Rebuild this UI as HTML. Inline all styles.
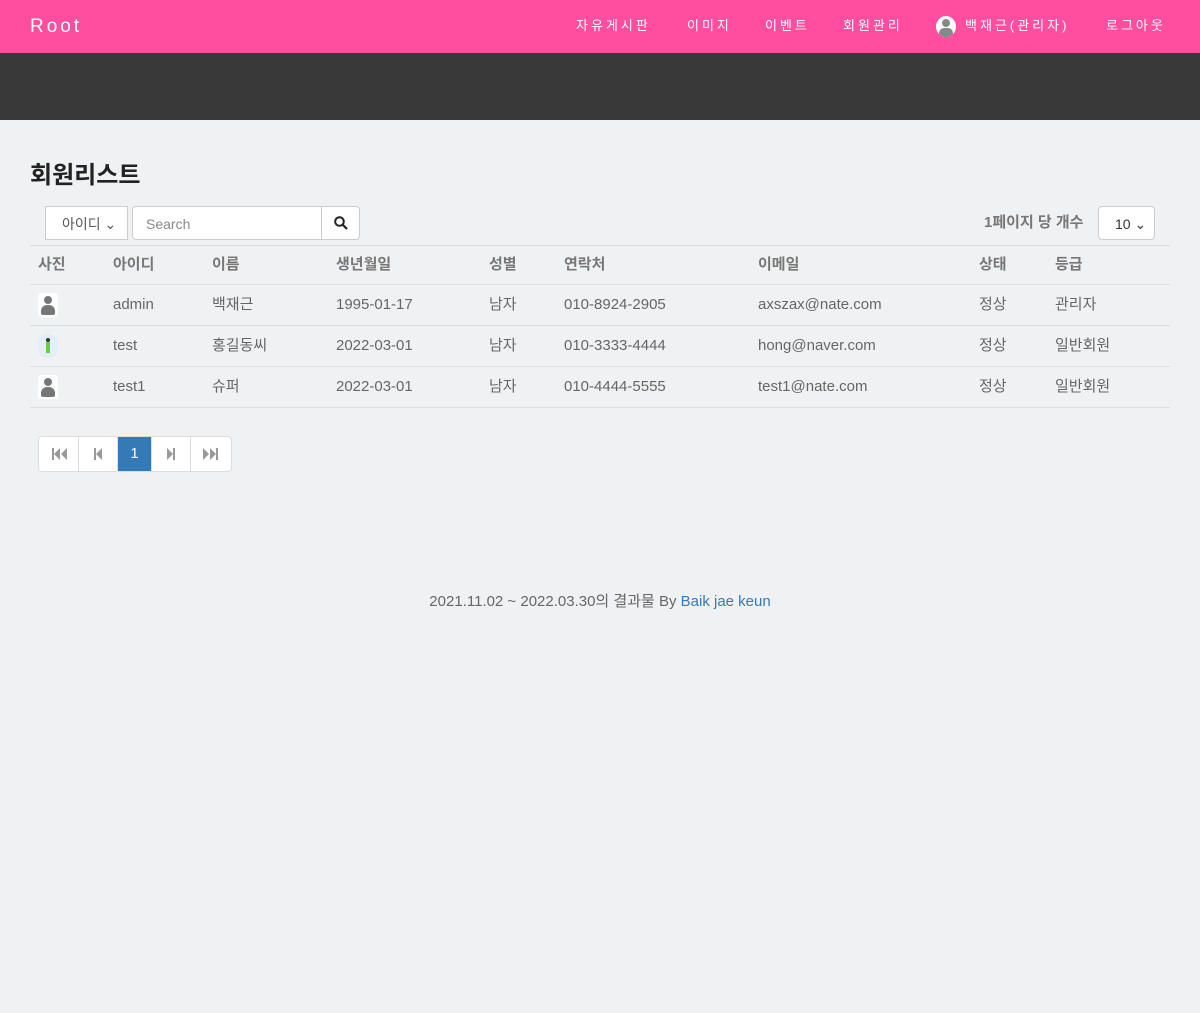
<!DOCTYPE html>
<html><head><meta charset="utf-8"><style>
*{box-sizing:border-box;margin:0;padding:0}
body{width:1200px;height:1013px;background:#f0f1f2;font-family:"Liberation Sans","Noto Sans CJK KR",sans-serif;color:#666;overflow:hidden;position:relative}
.nav{height:53px;background:#ff4da0;position:relative;color:#fff}
.brand{position:absolute;left:30px;top:16px;font-size:19px;letter-spacing:3px;line-height:22px}
.nav .it{position:absolute;top:17px;font-size:13px;letter-spacing:3px;line-height:18px}
.dark{height:67px;background:#393939}
h2{position:absolute;left:30px;top:155px;font-size:24px;color:#222;font-weight:bold}
.sel{position:absolute;left:45px;top:206px;width:83px;height:34px;background:#fff;border:1px solid #ccc;font-size:14px;padding:7px 0 0 16px;color:#555}
.srch{position:absolute;left:132px;top:206px;width:228px;height:34px;background:#fff;border:1px solid #ccc;border-radius:4px}
.srch span{position:absolute;left:13px;top:9px;font-size:14px;color:#888}
.srch i{position:absolute;left:188px;top:0;width:1px;height:32px;background:#ccc}
.cnt{position:absolute;left:984px;top:211px;font-size:15px;font-weight:bold;color:#777}
.sel2{position:absolute;left:1098px;top:206px;width:57px;height:34px;background:#fff;border:1px solid #ccc;border-radius:4px;font-size:14px;padding:9px 0 0 16px;color:#333}
.hr{position:absolute;left:30px;width:1140px;height:1px;background:#ddd}
.t{position:absolute;font-size:15px;color:#666;line-height:20px;height:20px;display:flex;align-items:center}
.th{font-weight:bold;color:#777}
.av{position:absolute;left:38px;width:20px;height:24px;background:#fff;border-radius:3px}
.av:before{content:"";position:absolute;left:6px;top:3px;width:8px;height:8px;border-radius:50%;background:#777}
.av:after{content:"";position:absolute;left:3px;top:12px;width:14px;height:10px;border-radius:6px 6px 2px 2px;background:#777}
.pg{position:absolute;left:38px;top:436px;height:36px;display:flex;border:1px solid #ddd;border-radius:4px;background:#fff;overflow:hidden}
.pg div{width:40px;border-right:1px solid #ddd;color:#999;font-size:15px;text-align:center;line-height:34px;display:flex;align-items:center;justify-content:center}
.pg .a{width:34px;background:#337ab7;color:#fff}
.foot{position:absolute;top:590px;left:0;width:1200px;text-align:center;font-size:15px;color:#666}
.foot a{color:#337ab7}
</style></head><body>
<div class="nav"><div class="brand">Root</div>
<div class="it" style="left:576px">자유게시판</div>
<div class="it" style="left:687px">이미지</div>
<div class="it" style="left:765px">이벤트</div>
<div class="it" style="left:843px">회원관리</div>
<div style="position:absolute;left:936px;top:16px;width:20px;height:21px;border-radius:50%;background:#fff;overflow:hidden"><div style="position:absolute;left:6px;top:3px;width:8px;height:8px;border-radius:50%;background:#888"></div><div style="position:absolute;left:3px;top:12px;width:14px;height:10px;border-radius:6px;background:#888"></div></div>
<div class="it" style="left:965px">백재근(관리자)</div>
<div class="it" style="left:1106px">로그아웃</div>
</div>
<div class="dark"></div>
<h2>회원리스트</h2>
<div class="sel">아이디 ⌄</div>
<div class="srch"><span>Search</span><i></i><svg style="position:absolute;left:201px;top:9px" width="14" height="14" viewBox="0 0 14 14"><circle cx="5.5" cy="5.5" r="4.3" fill="none" stroke="#222" stroke-width="2"/><path d="M8.5 8.5L13 13" stroke="#222" stroke-width="2.2"/></svg></div>
<div class="cnt">1페이지 당 개수</div>
<div class="sel2">10 ⌄</div>
<div class="hr" style="top:245px"></div>
<div class="hr" style="top:284px"></div>
<div class="hr" style="top:325px"></div>
<div class="hr" style="top:366px"></div>
<div class="hr" style="top:407px"></div>
<div class="t th" style="left:38px;top:255px">사진</div>
<div class="t th" style="left:113px;top:255px">아이디</div>
<div class="t th" style="left:212px;top:255px">이름</div>
<div class="t th" style="left:336px;top:255px">생년월일</div>
<div class="t th" style="left:489px;top:255px">성별</div>
<div class="t th" style="left:564px;top:255px">연락처</div>
<div class="t th" style="left:758px;top:255px">이메일</div>
<div class="t th" style="left:979px;top:255px">상태</div>
<div class="t th" style="left:1055px;top:255px">등급</div>

<div class="av" style="top:293px"></div>
<div class="t" style="left:113px;top:295px">admin</div><div class="t" style="left:212px;top:295px">백재근</div><div class="t" style="left:336px;top:295px">1995-01-17</div><div class="t" style="left:489px;top:295px">남자</div><div class="t" style="left:564px;top:295px">010-8924-2905</div><div class="t" style="left:758px;top:295px">axszax@nate.com</div><div class="t" style="left:979px;top:295px">정상</div><div class="t" style="left:1055px;top:295px">관리자</div>

<div style="position:absolute;left:38px;top:334px;width:20px;height:24px;background:#e4eefa;border-radius:8px"><div style="position:absolute;left:8px;top:4px;width:4px;height:4px;border-radius:50%;background:#333"></div><div style="position:absolute;left:8px;top:8px;width:4px;height:11px;background:#6c4"></div></div>
<div class="t" style="left:113px;top:336px">test</div><div class="t" style="left:212px;top:336px">홍길동씨</div><div class="t" style="left:336px;top:336px">2022-03-01</div><div class="t" style="left:489px;top:336px">남자</div><div class="t" style="left:564px;top:336px">010-3333-4444</div><div class="t" style="left:758px;top:336px">hong@naver.com</div><div class="t" style="left:979px;top:336px">정상</div><div class="t" style="left:1055px;top:336px">일반회원</div>

<div class="av" style="top:375px"></div>
<div class="t" style="left:113px;top:377px">test1</div><div class="t" style="left:212px;top:377px">슈퍼</div><div class="t" style="left:336px;top:377px">2022-03-01</div><div class="t" style="left:489px;top:377px">남자</div><div class="t" style="left:564px;top:377px">010-4444-5555</div><div class="t" style="left:758px;top:377px">test1@nate.com</div><div class="t" style="left:979px;top:377px">정상</div><div class="t" style="left:1055px;top:377px">일반회원</div>

<div class="pg">
<div><svg width="16" height="12" viewBox="0 0 16 12"><path d="M1 0h2v12H1zM9 0v12L3 6zM16 0v12L10 6z" fill="#999"/></svg></div>
<div style="width:39px"><svg width="10" height="12" viewBox="0 0 10 12"><path d="M1 0h2v12H1zM9 0v12L3 6z" fill="#999"/></svg></div>
<div class="a">1</div>
<div style="width:39px"><svg width="10" height="12" viewBox="0 0 10 12"><path d="M1 0v12l6-6zM7 0h2v12H7z" fill="#999"/></svg></div>
<div style="border:none"><svg width="16" height="12" viewBox="0 0 16 12"><path d="M0 0v12l6-6zM7 0v12l6-6zM13 0h2v12h-2z" fill="#999"/></svg></div>
</div>
<div class="foot">2021.11.02 ~ 2022.03.30의 결과물 By <a>Baik jae keun</a></div>
</body></html>
